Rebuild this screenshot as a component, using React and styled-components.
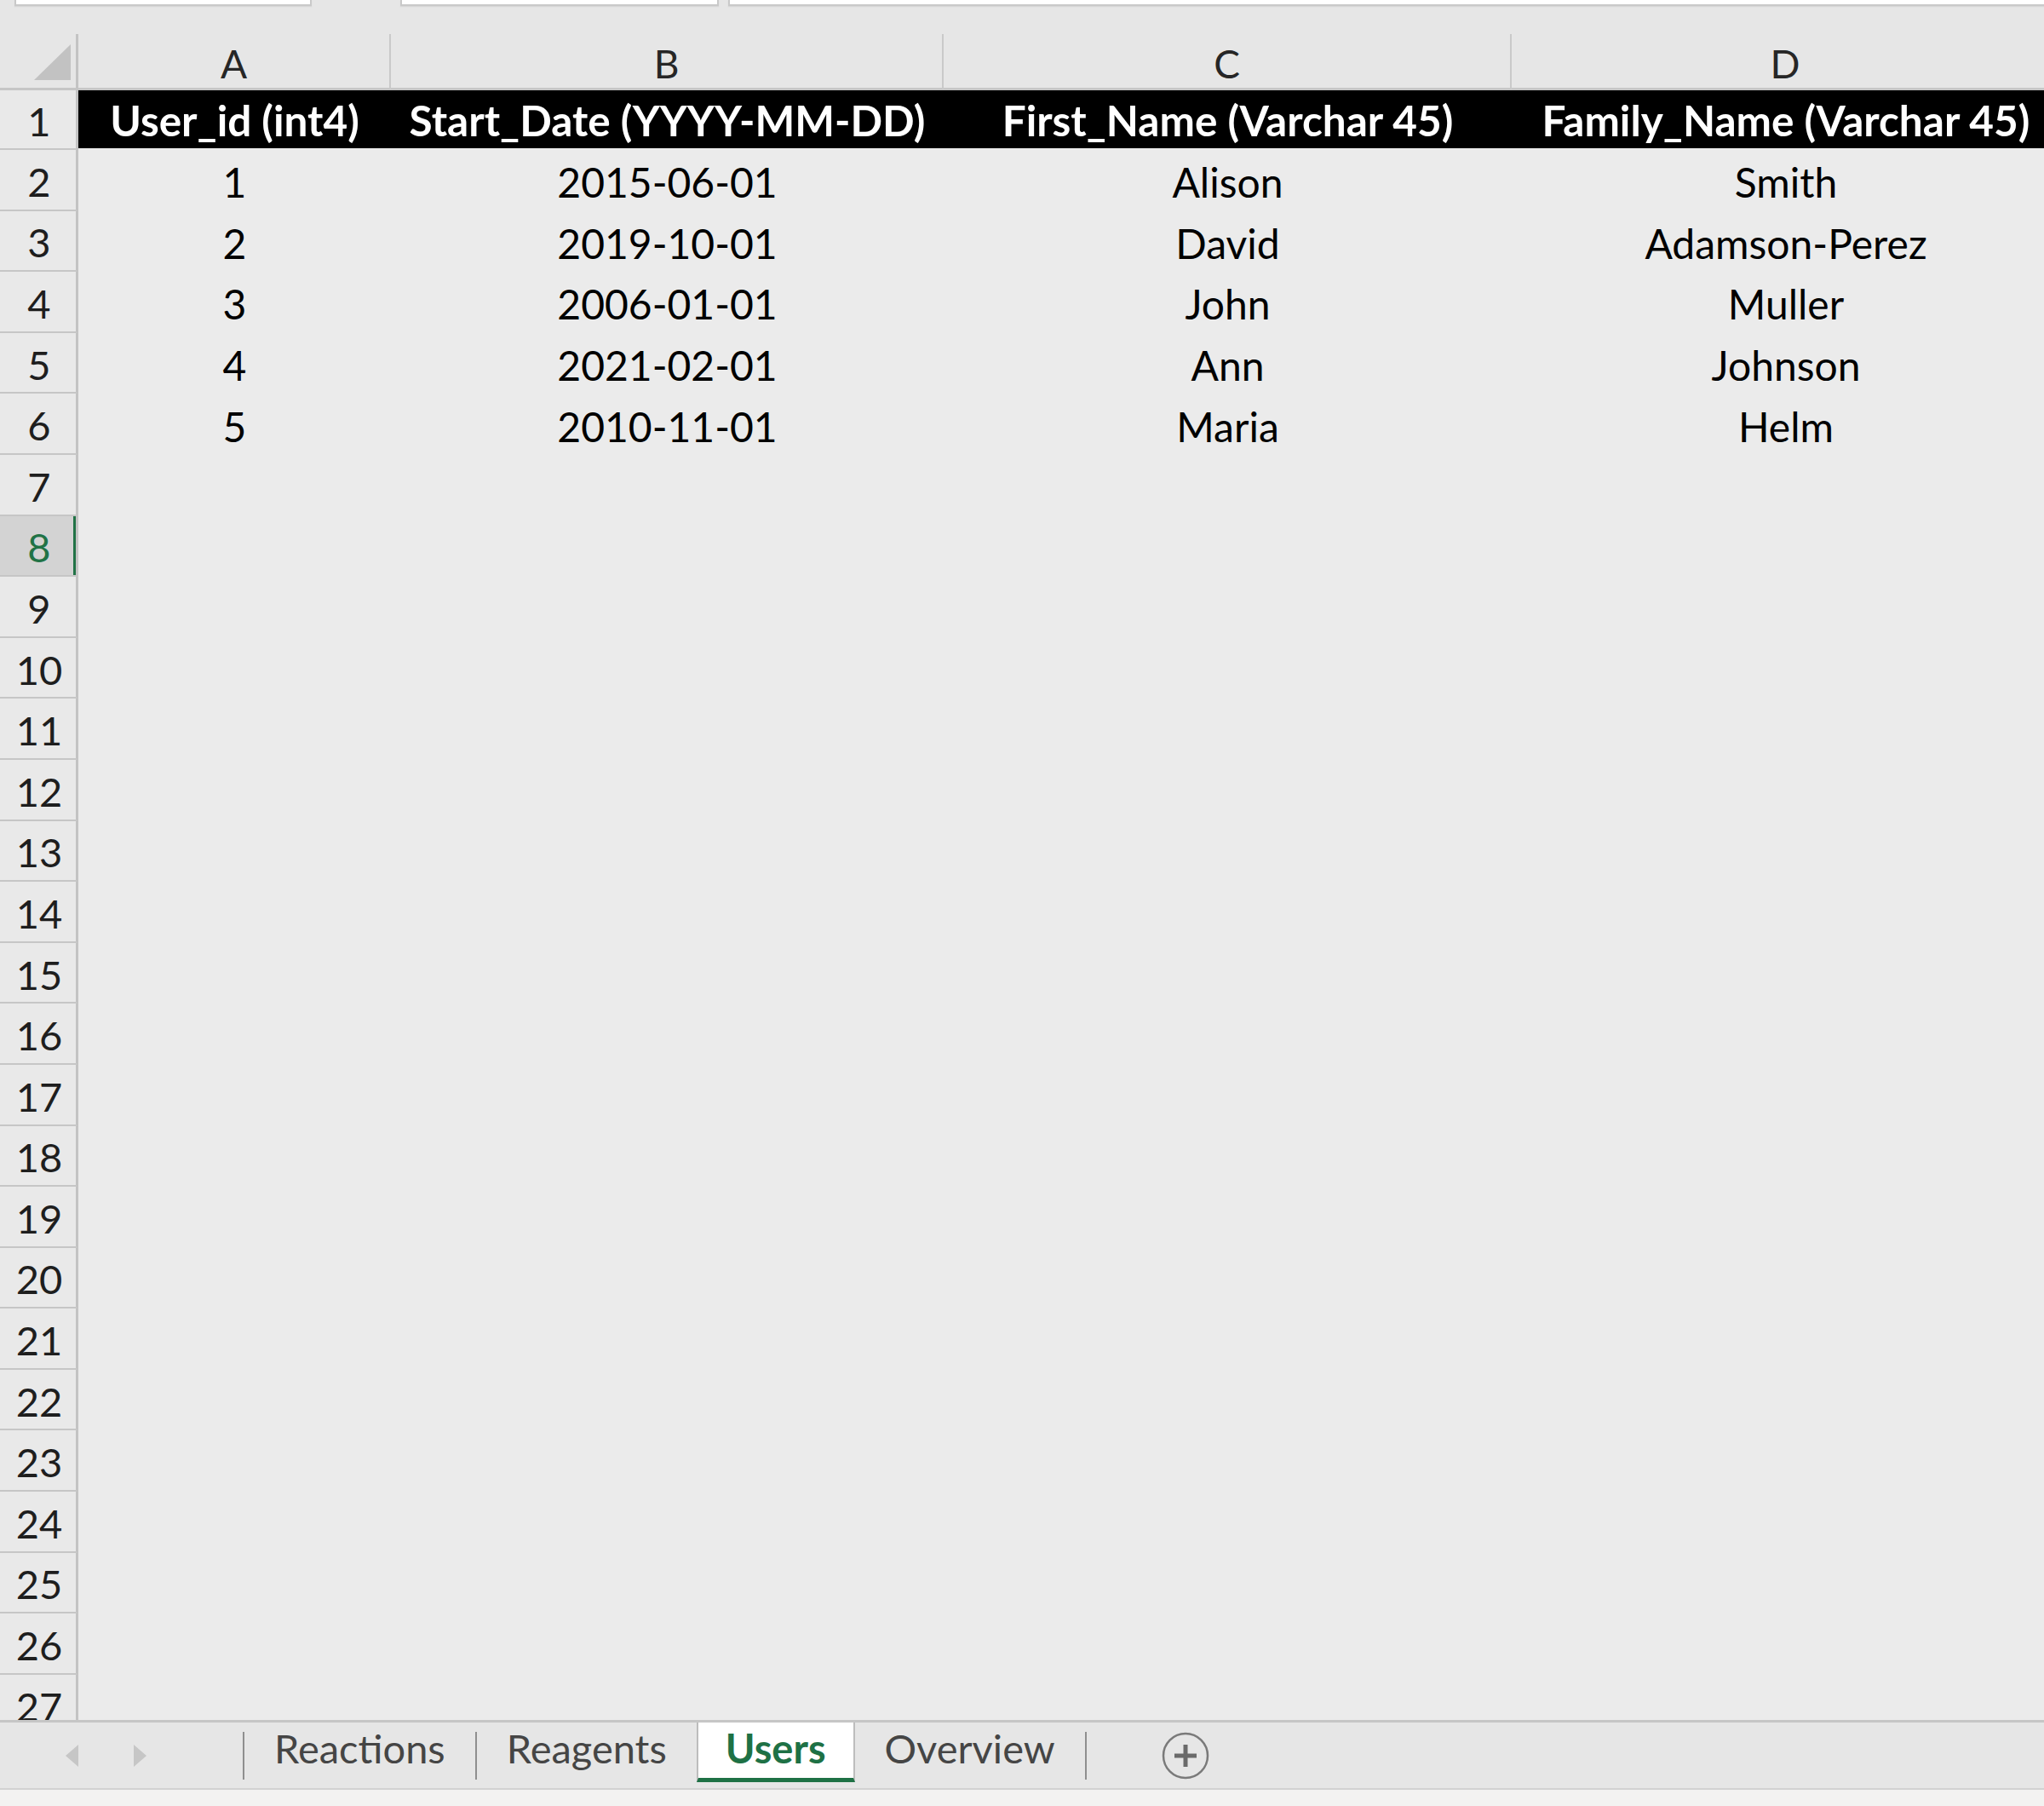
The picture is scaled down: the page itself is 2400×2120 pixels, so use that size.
import React from 'react';
import styled, { createGlobalStyle } from 'styled-components';

const columns = [
    { key: 'A', width: 367 },
    { key: 'B', width: 649 },
    { key: 'C', width: 667 },
    { key: 'D', width: 644 },
];

const headers = ['User_id (int4)', 'Start_Date (YYYY-MM-DD)', 'First_Name (Varchar 45)', 'Family_Name (Varchar 45)'];

const users = [
    ['1', '2015-06-01', 'Alison', 'Smith'],
    ['2', '2019-10-01', 'David', 'Adamson-Perez'],
    ['3', '2006-01-01', 'John', 'Muller'],
    ['4', '2021-02-01', 'Ann', 'Johnson'],
    ['5', '2010-11-01', 'Maria', 'Helm'],
];

const TOTAL_ROWS = 27;
const SELECTED_ROW = 8;

const App = () => {
    const rows = [];
    for (let n = 2; n <= TOTAL_ROWS; n++) {
        const data = users[n - 2] || ['', '', '', ''];
        rows.push(
            <React.Fragment key={n}>
                <RowNumber selected={n === SELECTED_ROW}>{n}</RowNumber>
                {data.map((value, i) => (
                    <Cell key={i}>{value}</Cell>
                ))}
            </React.Fragment>
        );
    }

    return (
        <>
            <GlobalStyle />
            <Window>
                <FormulaStrip>
                    <NameBox />
                    <FormulaBox />
                    <FormulaInput />
                </FormulaStrip>

                <Sheet>
                    <SelectAll>
                        <Corner />
                    </SelectAll>
                    {columns.map((col) => (
                        <ColumnHeader key={col.key}>{col.key}</ColumnHeader>
                    ))}

                    <RowNumber>1</RowNumber>
                    {headers.map((title) => (
                        <HeaderCell key={title}>{title}</HeaderCell>
                    ))}

                    {rows}
                </Sheet>

                <TabBar>
                    <NavArrows>
                        <Arrow dir="left" />
                        <Arrow dir="right" />
                    </NavArrows>
                    <Divider />
                    <Tab>Reactions</Tab>
                    <Divider />
                    <Tab>Reagents</Tab>
                    <Tab active>Users</Tab>
                    <Tab>Overview</Tab>
                    <Divider />
                    <AddSheet>
                        <svg width="56" height="56" viewBox="0 0 56 56">
                            <circle cx="28" cy="28" r="26" fill="none" stroke="#7a7a7a" strokeWidth="2.5" />
                            <path d="M28 15v26M15 28h26" stroke="#6a6a6a" strokeWidth="5" />
                        </svg>
                    </AddSheet>
                </TabBar>
                <StatusStrip />
            </Window>
        </>
    );
};

export default App;

const GlobalStyle = createGlobalStyle`
    html, body {
        margin: 0;
        padding: 0;
        overflow: hidden;
        background: #e6e6e6;
    }
    * {
        box-sizing: border-box;
    }
`;

const Window = styled.div`
    width: 2400px;
    height: 2120px;
    display: flex;
    flex-direction: column;
    overflow: hidden;
    background: #e6e6e6;
    font-family: Lato, "Open Sans", sans-serif;
`;

const FormulaStrip = styled.div`
    height: 40px;
    flex-shrink: 0;
    display: flex;
    align-items: flex-start;
    padding-left: 17px;
`;

const StripBox = styled.div`
    height: 7px;
    background: #ffffff;
    border: 2px solid #c9c9c9;
    border-top: none;
    box-shadow: 0 1px 1px #d6d6d6;
`;

const NameBox = styled(StripBox)`
    width: 349px;
`;

const FormulaBox = styled(StripBox)`
    width: 374px;
    margin-left: 104px;
`;

const FormulaInput = styled(StripBox)`
    flex: 1;
    margin-left: 11px;
    margin-right: -10px;
`;

const Sheet = styled.div`
    flex: 1 1 0;
    min-height: 0;
    overflow: hidden;
    display: grid;
    grid-template-columns: 92px ${columns.map((c) => c.width + 'px').join(' ')};
    grid-template-rows: 66px 70px;
    grid-auto-rows: 71.6px;
    background: #ebebeb;
`;

const SelectAll = styled.div`
    background: #e6e6e6;
    border-right: 3px solid #c3c3c3;
    border-bottom: 3px solid #c6c6c6;
    display: flex;
    align-items: flex-end;
    justify-content: flex-end;
    padding: 0 6px 9px 0;
`;

const Corner = styled.div`
    width: 0;
    height: 0;
    border-left: 43px solid transparent;
    border-bottom: 42px solid #c2c2c2;
`;

const ColumnHeader = styled.div`
    background: #e6e6e6;
    border-right: 2px solid #c9c9c9;
    border-bottom: 3px solid #c6c6c6;
    display: flex;
    align-items: center;
    justify-content: center;
    padding-top: 6px;
    font-size: 46px;
    color: #262626;
`;

const RowNumber = styled.div`
    background: ${(p) => (p.selected ? '#d3d3d3' : '#e9e9e9')};
    color: ${(p) => (p.selected ? '#217346' : '#1e1e1e')};
    border-right: 3px solid #c3c3c3;
    border-bottom: 2px solid #c6c6c6;
    box-shadow: ${(p) => (p.selected ? 'inset -3px 0 0 #217346' : 'none')};
    display: flex;
    align-items: center;
    justify-content: center;
    padding-top: 4px;
    padding-left: 3px;
    font-size: 47px;
    overflow: hidden;
`;

const Cell = styled.div`
    display: flex;
    align-items: center;
    justify-content: center;
    padding-top: 4px;
    font-size: 48px;
    color: #000000;
    white-space: nowrap;
`;

const HeaderCell = styled(Cell)`
    background: #000000;
    color: #ffffff;
    font-weight: 700;
    font-size: 49.5px;
    border-bottom: 2px solid #ebebeb;
    padding-top: 2px;
    overflow: hidden;
`;

const TabBar = styled.div`
    height: 82px;
    flex-shrink: 0;
    display: flex;
    align-items: center;
    background: #e6e6e6;
    border-top: 3px solid #c6c6c6;
    border-bottom: 2px solid #d2d2d2;
`;

const NavArrows = styled.div`
    display: flex;
    align-items: center;
    gap: 65px;
    padding-left: 77px;
    margin-right: 113px;
`;

const Arrow = styled.div`
    width: 0;
    height: 0;
    border-top: 13px solid transparent;
    border-bottom: 13px solid transparent;
    ${(p) => (p.dir === 'left' ? 'border-right: 15px solid #c6c6c6;' : 'border-left: 15px solid #c6c6c6;')}
`;

const Divider = styled.div`
    width: 2px;
    height: 56px;
    background: #8f8f8f;
    flex-shrink: 0;
`;

const Tab = styled.div`
    align-self: flex-start;
    height: 70px;
    display: flex;
    align-items: center;
    padding-top: 0;
    padding-bottom: 6px;
    padding-left: ${(p) => (p.active ? '32px' : '35px')};
    padding-right: ${(p) => (p.active ? '32px' : '35px')};
    font-size: 47px;
    white-space: nowrap;
    color: ${(p) => (p.active ? '#1e7145' : '#454545')};
    font-weight: ${(p) => (p.active ? 700 : 400)};
    background: ${(p) => (p.active ? '#ffffff' : 'transparent')};
    border-left: ${(p) => (p.active ? '2px solid #bdbdbd' : 'none')};
    border-right: ${(p) => (p.active ? '2px solid #bdbdbd' : 'none')};
    border-bottom: 5px solid ${(p) => (p.active ? '#1e7145' : 'transparent')};
`;

const AddSheet = styled.div`
    display: flex;
    margin-left: 88px;
`;

const StatusStrip = styled.div`
    height: 19px;
    flex-shrink: 0;
    background: #f3f2f1;
`;
